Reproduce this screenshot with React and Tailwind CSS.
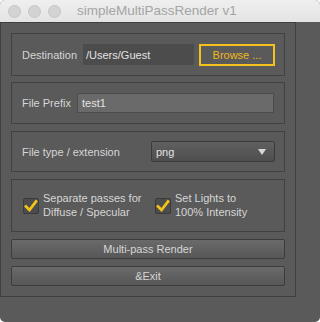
import React from "react";

function Check() {
  return (
    <div className="w-[16px] h-[16px] bg-[#4c4c4c] border border-[#3a3a3a] rounded-[2px] flex items-center justify-center shrink-0">
      <svg width="14" height="14" viewBox="0 0 14 14">
        <path d="M2 7.5 L5.5 11 L12 2.5" fill="none" stroke="#f2c21b" strokeWidth="2.8" strokeLinecap="square" strokeLinejoin="miter" />
      </svg>
    </div>
  );
}

function Btn({ children }) {
  return (
    <div className="h-[20px] w-full border border-[#3c3c3c] rounded-[2px] bg-gradient-to-b from-[#6a6a6a] to-[#575757] flex items-center justify-center text-[#d6d6d6]">
      {children}
    </div>
  );
}

export default function App() {
  return (
    <div className="w-[320px] h-[322px] bg-white" style={{ fontFamily: '"Liberation Sans", Arial, sans-serif' }}>
      <div className="w-full h-full rounded-[5px] overflow-hidden bg-[#5a5a5a] flex flex-col text-[11px] leading-[14px]">
        <div className="h-[22px] shrink-0 bg-gradient-to-b from-[#efefef] to-[#e4e4e4] flex items-center">
          <div className="flex items-center gap-[7px] ml-[8px]">
            <div className="w-[13px] h-[13px] rounded-full bg-[#d3d3d3] border border-[#c6c6c6]" />
            <div className="w-[13px] h-[13px] rounded-full bg-[#d3d3d3] border border-[#c6c6c6]" />
            <div className="w-[13px] h-[13px] rounded-full bg-[#d3d3d3] border border-[#c6c6c6]" />
          </div>
          <div className="ml-[16px] text-[13.5px] leading-none text-[#a4a4a4]">simpleMultiPassRender v1</div>
        </div>
        <div className="w-[296px] h-[275px] border border-[#3f3f3f] px-[10px] pt-[10px] flex flex-col">
          <div className="h-[43px] border border-[#414141] flex items-center pl-[10px] pr-[9px] text-[#d6d6d6]">
            <span className="w-[61px]">Destination</span>
            <div className="w-[111px] h-[21px] bg-[#4c4c4c] flex items-center px-[3px] text-[#e2e2e2]">/Users/Guest</div>
            <div className="ml-[5px] w-[76px] h-[22px] border-2 border-[#f5c11a] flex items-center justify-center text-[#f0b81a]">Browse ...</div>
          </div>
          <div className="mt-[6px] h-[42px] border border-[#414141] flex items-center pl-[10px] pr-[10px] text-[#d6d6d6]">
            <span className="w-[55px]">File Prefix</span>
            <div className="flex-1 h-[20px] bg-[#6a6a6a] border border-[#4c4c4c] flex items-center px-[4px] text-[#e2e2e2]">test1</div>
          </div>
          <div className="mt-[7px] h-[41px] border border-[#414141] flex items-center pl-[10px] pr-[9px] text-[#d6d6d6]">
            <span className="w-[129px]">File type / extension</span>
            <div className="w-[124px] h-[21px] border border-[#3a3a3a] rounded-[2px] bg-gradient-to-b from-[#606060] to-[#4e4e4e] flex items-center pl-[4px] pr-[8px] text-[#e2e2e2]">
              <span className="flex-1">png</span>
              <svg width="8" height="6" viewBox="0 0 8 6"><path d="M0 0 H8 L4 6 Z" fill="#d8d8d8" /></svg>
            </div>
          </div>
          <div className="mt-[7px] h-[53px] border border-[#414141] flex items-center pl-[11px] text-[#d6d6d6]">
            <div className="flex items-center w-[132px]">
              <Check />
              <div className="ml-[4px] -mt-[1px]">Separate passes for<br />Diffuse / Specular</div>
            </div>
            <div className="flex items-center">
              <Check />
              <div className="ml-[4px] -mt-[1px]">Set Lights to<br />100% Intensity</div>
            </div>
          </div>
          <div className="mt-[7px]"><Btn>Multi-pass Render</Btn></div>
          <div className="mt-[7px]"><Btn>&amp;Exit</Btn></div>
        </div>
      </div>
    </div>
  );
}
